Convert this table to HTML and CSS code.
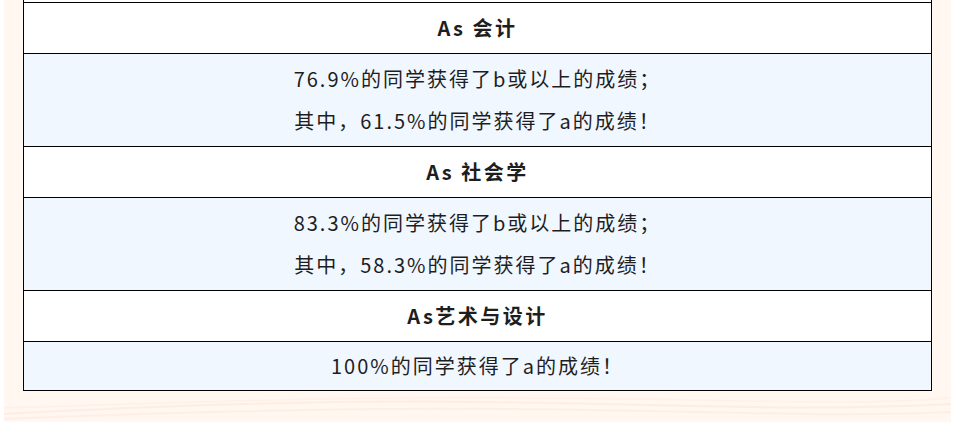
FILE: index.html
```html
<!DOCTYPE html>
<html lang="zh-CN">
<head>
<meta charset="utf-8">
<link rel="stylesheet" href="styles.css">
</head>
<body>
<div class="panel">
  <div class="table">
    <div class="row top-stub"></div>
    <div class="row head">As 会计</div>
    <div class="row data">76.9%的同学获得了b或以上的成绩；<br>其中，61.5%的同学获得了a的成绩！</div>
    <div class="row head">As 社会学</div>
    <div class="row data">83.3%的同学获得了b或以上的成绩；<br>其中，58.3%的同学获得了a的成绩！</div>
    <div class="row head">As艺术与设计</div>
    <div class="row data single">100%的同学获得了a的成绩！</div>
  </div>
  <svg class="waves" viewBox="0 0 947 30" preserveAspectRatio="none" aria-hidden="true">
    <path d="M0 22 C 150 14, 300 8, 480 10 S 800 20, 947 12" fill="none" stroke="#fde6d8" stroke-width="2" opacity="0.6"/>
    <path d="M0 27 C 160 20, 320 16, 500 17 S 820 26, 947 20" fill="none" stroke="#fde8dc" stroke-width="2" opacity="0.5"/>
    <path d="M0 16 C 180 10, 360 4, 560 6 S 840 14, 947 6" fill="none" stroke="#fdece2" stroke-width="1.5" opacity="0.5"/>
  </svg>
</div>
</body>
</html>
```
FILE: styles.css
```css
html, body {
  margin: 0;
  padding: 0;
  background: #ffffff;
}
body {
  width: 958px;
  height: 428px;
  overflow: hidden;
  font-family: "Noto Sans CJK SC", "Noto Sans", sans-serif;
  color: #1e1e1e;
}
.panel {
  position: relative;
  margin-left: 4px;
  width: 947px;
  height: 422px;
  background: #fff7f0;
  box-sizing: border-box;
  padding: 0 19px 0 19px;
  overflow: hidden;
}
.table {
  width: 909px;
  border-left: 1px solid #000;
  border-right: 1px solid #000;
  border-bottom: 1px solid #000;
  box-sizing: border-box;
  position: relative;
  z-index: 1;
}
.row {
  border-bottom: 1px solid #000;
  text-align: center;
  font-size: 20px;
  letter-spacing: 2px;
}
.row:last-child {
  border-bottom: none;
}
.top-stub {
  height: 2px;
  background: #fff;
}
.head {
  background: #ffffff;
  font-weight: 700;
  line-height: 42px;
  padding: 4px 0 3.5px;
  letter-spacing: 2.5px;
}
.data {
  background: #f0f7ff;
  line-height: 42px;
  padding: 4px 0 4.5px;
}
.data.single {
  padding: 3px 0 3px;
}
.waves {
  position: absolute;
  left: 0;
  bottom: 0;
  width: 947px;
  height: 30px;
}
```
